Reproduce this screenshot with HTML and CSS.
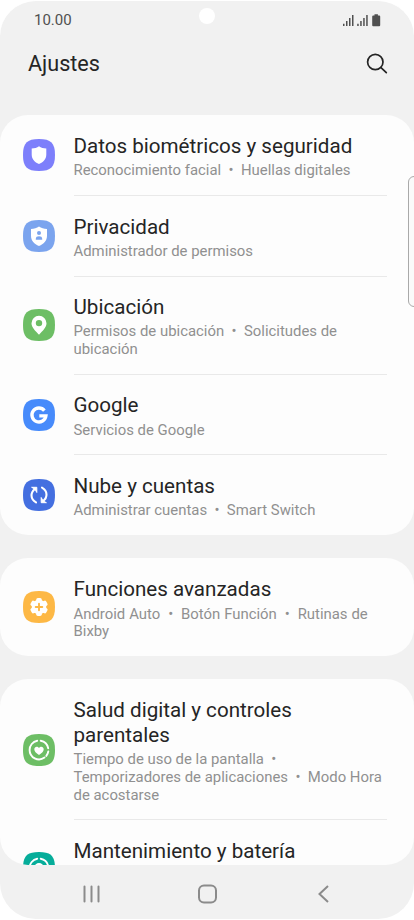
FILE: index.html
```html
<!DOCTYPE html>
<html lang="es">
<head>
<meta charset="utf-8">
<title>Ajustes</title>
<link rel="stylesheet" href="styles.css">
</head>
<body>
<div class="phone">
  <div class="camera"></div>
  <div class="edge-handle"></div>
  <div class="statusbar">
    <span class="time">10.00</span>
    <svg class="status-icons" width="40" height="14" viewBox="0 0 40 14">
      <g fill="#505050">
        <path d="M1 10.800h1.500V13H1zM4 8h1.500v5H4zM7 5h1.500v8H7zM10 2h1.500v11H10zM15.200 10.800h1.500V13h-1.500zM18.200 8h1.500v5h-1.500zM21.200 5h1.500v8h-1.500zM24.200 2h1.500v11h-1.500z"/>
        <path d="M32.500 1.200h3.400v1.300h1.300q1 0 1 1v8.700q0 1-1 1h-6q-1 0-1-1V3.500q0-1 1-1h1.300z"/>
      </g>
    </svg>
  </div>
  <header class="header">
    <h1>Ajustes</h1>
    <svg width="24" height="24" viewBox="0 0 24 24" fill="none" stroke="#252525" stroke-width="1.700" stroke-linecap="round"><circle cx="10.300" cy="10" r="7.700"/><path d="M16 15.700l5.300 5"/></svg>
  </header>
  <main class="list">
    <section class="card">
      <div class="row">
        <svg class="icon" viewBox="0 0 32 32"><path class="violet" d="M16 0C28 0 32 4 32 16S28 32 16 32 0 28 0 16 4 0 16 0Z"/><path fill="#fff" d="M16 7.200c2 1.500 4.500 2.200 7.300 2.200v6.200c0 4.500-3 7.700-7.300 9.500-4.300-1.800-7.300-5-7.300-9.500V9.400c2.800 0 5.300-.7 7.300-2.200z"/></svg>
        <div class="text"><h2>Datos biométricos y seguridad</h2><p>Reconocimiento facial&nbsp; •&nbsp; Huellas digitales</p></div>
      </div>
      <div class="row">
        <svg class="icon" viewBox="0 0 32 32"><path class="sky" d="M16 0C28 0 32 4 32 16S28 32 16 32 0 28 0 16 4 0 16 0Z"/><path fill="#fff" d="M16 6.600c2.200 1.600 4.900 2.300 8 2.300v6.800c0 4.900-3.300 8.300-8 10.300-4.700-2-8-5.400-8-10.300V8.900c3.100 0 5.800-.7 8-2.300z"/><circle class="sky" cx="16" cy="13" r="2"/><path class="sky" d="M12.800 19.700v-1c0-1.700 1.300-2.500 3.200-2.500s3.200.8 3.200 2.500v1z"/></svg>
        <div class="text"><h2>Privacidad</h2><p>Administrador de permisos</p></div>
      </div>
      <div class="row">
        <svg class="icon" viewBox="0 0 32 32"><path class="green" d="M16 0C28 0 32 4 32 16S28 32 16 32 0 28 0 16 4 0 16 0Z"/><path fill="#fff" fill-rule="evenodd" d="M16 6.700a7.500 7.500 0 0 1 7.500 7.500c0 4-3.700 7.500-7.500 11.500-3.800-4-7.500-7.500-7.500-11.500A7.500 7.500 0 0 1 16 6.700zm0 4.200a3.200 3.200 0 1 0 0 6.400 3.200 3.200 0 0 0 0-6.400z"/></svg>
        <div class="text"><h2>Ubicación</h2><p>Permisos de ubicación&nbsp; •&nbsp; Solicitudes de ubicación</p></div>
      </div>
      <div class="row">
        <svg class="icon" viewBox="0 0 32 32"><path class="blue" d="M16 0C28 0 32 4 32 16S28 32 16 32 0 28 0 16 4 0 16 0Z"/><path fill="none" stroke="#fff" stroke-width="3.400" d="M21.400 11.600A7 7 0 1 0 22.900 16.900H16.300"/></svg>
        <div class="text"><h2>Google</h2><p>Servicios de Google</p></div>
      </div>
      <div class="row">
        <svg class="icon" viewBox="0 0 32 32"><path class="royal" d="M16 0C28 0 32 4 32 16S28 32 16 32 0 28 0 16 4 0 16 0Z"/><g fill="none" stroke="#fff" stroke-width="2.100" stroke-linecap="round" stroke-linejoin="round"><path d="M13 23.400C7.200 20.200 7.200 13.500 12 10"/><path d="M19 8.600c5.800 3.200 5.800 9.900 1 13.400"/></g><path fill="#fff" stroke="#fff" stroke-linejoin="round" d="M8.600 8.300h5.200v5.200l-1.800-3.300zM23.400 23.700h-5.200v-5.200l1.800 3.300z"/></svg>
        <div class="text"><h2>Nube y cuentas</h2><p>Administrar cuentas&nbsp; •&nbsp; Smart Switch</p></div>
      </div>
    </section>
    <section class="card">
      <div class="row">
        <svg class="icon" viewBox="0 0 32 32"><path class="amber" d="M16 0C28 0 32 4 32 16S28 32 16 32 0 28 0 16 4 0 16 0Z"/><g fill="#fff"><circle cx="16" cy="16" r="7.300"/><g id="tooth"><rect x="13.200" y="7" width="5.600" height="18" rx="1.700"/></g><use href="#tooth" transform="rotate(60 16 16)"/><use href="#tooth" transform="rotate(120 16 16)"/></g><path stroke="#fdb845" stroke-width="1.900" stroke-linecap="round" d="M16 12.700v6.600M12.700 16h6.600"/></svg>
        <div class="text"><h2>Funciones avanzadas</h2><p class="wide">Android Auto&nbsp; •&nbsp; Botón Función&nbsp; •&nbsp; Rutinas de Bixby</p></div>
      </div>
    </section>
    <section class="card">
      <div class="row">
        <svg class="icon" viewBox="0 0 32 32"><path class="green" d="M16 0C28 0 32 4 32 16S28 32 16 32 0 28 0 16 4 0 16 0Z"/><path fill="none" stroke="#fff" stroke-width="1.900" stroke-linecap="round" d="M17.700 6.700A9.400 9.400 0 0 1 25.200 14.200M25.300 17.400A9.400 9.400 0 0 1 23.300 21.900M21.500 23.600A9.400 9.400 0 0 1 6.600 16 9.400 9.400 0 0 1 14.200 6.700"/><path fill="#fff" d="M16 21c-3-2-4.700-3.500-4.700-5.700 0-2.800 3.300-3.400 4.700-1.200 1.400-2.200 4.700-1.600 4.700 1.200 0 2.200-1.700 3.700-4.700 5.700z"/></svg>
        <div class="text"><h2>Salud digital y controles parentales</h2><p>Tiempo de uso de la pantalla&nbsp; • Temporizadores de aplicaciones&nbsp; •&nbsp; Modo Hora de acostarse</p></div>
      </div>
      <div class="row tall">
        <svg class="icon" viewBox="0 0 32 32"><path class="teal" d="M16 0C28 0 32 4 32 16S28 32 16 32 0 28 0 16 4 0 16 0Z"/><path fill="none" stroke="#fff" stroke-width="1.900" stroke-linecap="round" d="M17.700 6.700A9.400 9.400 0 0 1 25.200 14.200M25.300 17.400A9.400 9.400 0 0 1 6.600 16 9.400 9.400 0 0 1 14.200 6.700"/><circle cx="16" cy="15.500" r="4.500" fill="#fff"/></svg>
        <div class="text"><h2>Mantenimiento y batería</h2></div>
      </div>
    </section>
  </main>
  <nav class="navbar">
    <svg width="20" height="20" viewBox="0 0 20 20" fill="none" stroke="#8b8b8b" stroke-width="2" stroke-linecap="round"><path d="M2.500 2.500v15M9.500 2.500v15M16.500 2.500v15"/></svg>
    <svg width="20" height="20" viewBox="0 0 20 20" fill="none" stroke="#8b8b8b" stroke-width="2"><rect x="1" y="1.500" width="17" height="17" rx="5"/></svg>
    <svg width="20" height="20" viewBox="0 0 20 20" fill="none" stroke="#8b8b8b" stroke-width="2"><path d="M14 2l-8.500 8 8.500 8"/></svg>
  </nav>
</div>
</body>
</html>
```
FILE: styles.css
```css
* { box-sizing: border-box; }
body { margin: 0; background: #fff; font-family: Roboto, "Liberation Sans", sans-serif; }
.phone {
  position: relative;
  display: flex;
  flex-direction: column;
  width: 414px;
  height: 919px;
  border-top: 1px solid #fff;
  border-radius: 36px;
  overflow: hidden;
  background: #f1f1f1;
}
.camera {
  position: absolute;
  left: 199px;
  top: 7px;
  width: 16px;
  height: 16px;
  border-radius: 50%;
  background: #fff;
}
.edge-handle {
  position: absolute;
  z-index: 1;
  left: 408px;
  top: 175px;
  width: 20px;
  height: 131px;
  border: 1px solid #a9a9a9;
  border-radius: 6px;
  background: #fafafa;
}
.statusbar {
  display: flex;
  justify-content: space-between;
  align-items: center;
  height: 38px;
  padding: 0 32px 0 34px;
  flex: none;
}
.time { font-size: 15px; color: #505050; }
.header {
  display: flex;
  justify-content: space-between;
  align-items: center;
  height: 50px;
  padding: 0 25px 0 28px;
  margin-bottom: 26px;
  flex: none;
}
.header h1 { margin: 0 0 1px; font-size: 21.600px; font-weight: 400; color: #252525; }
.list {
  display: flex;
  flex-direction: column;
  gap: 23.300px;
  height: 750px;
  flex: none;
  overflow: hidden;
  border-radius: 0 0 28px 28px;
}
.card { flex: none; padding-top: 0.500px; border-radius: 28px; background: #fdfdfd; overflow: hidden; }
.row {
  display: grid;
  grid-template-columns: 32px 1fr;
  column-gap: 18.500px;
  align-items: center;
  padding: 0 27.500px 0 23px;
}
.icon { display: block; width: 32px; height: 32px; margin-bottom: 1px; }
.text { padding: 18.500px 0 14.950px; border-bottom: 1px solid #e9e9e9; }
.row:last-child .text { border-bottom: 0; }
.tall { height: 96px; }
.tall .text { align-self: start; }
.text h2 { margin: 0 0 4px; font-size: 20.600px; line-height: 24.300px; font-weight: 400; color: #252525; }
.text p { margin: 0; font-size: 14.900px; line-height: 17.800px; color: #909090; }
.text .wide { word-spacing: 0.250px; }
.violet { fill: #7d7ffb; }
.sky { fill: #7ba4ee; }
.green { fill: #6dbe65; }
.blue { fill: #478bfb; }
.royal { fill: #446fe0; }
.amber { fill: #fdb845; }
.teal { fill: #06ad9a; }
.navbar {
  display: flex;
  justify-content: space-between;
  align-items: center;
  height: 57px;
  flex: none;
  padding: 0 80px 0 82px;
}
```
